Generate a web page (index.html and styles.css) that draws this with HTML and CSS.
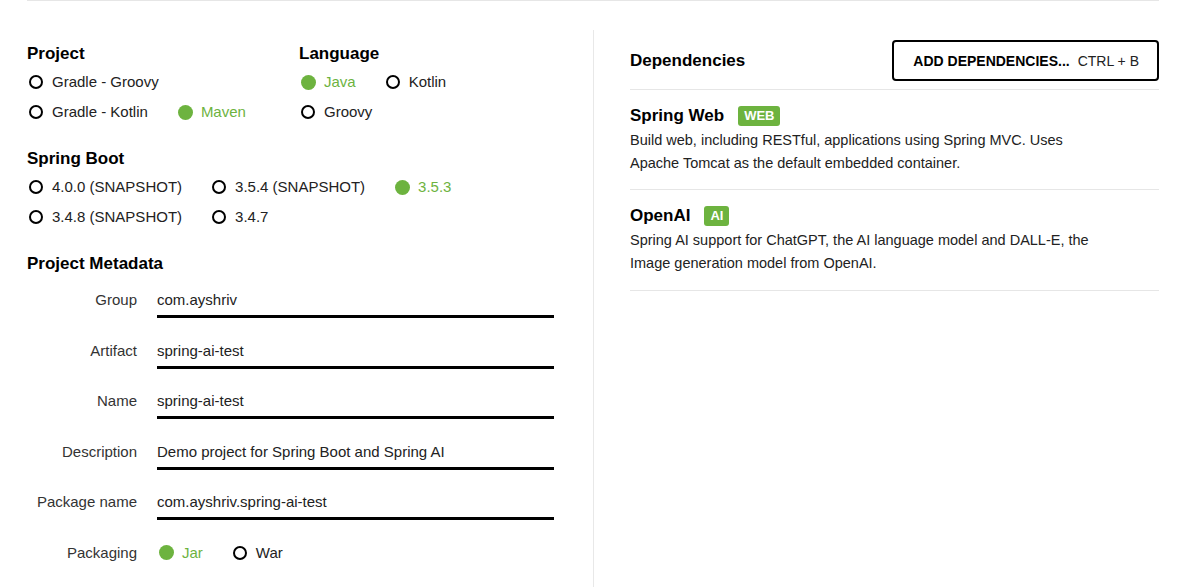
FILE: index.html
```html
<!DOCTYPE html>
<html lang="en">
<head>
    <meta charset="UTF-8">
    <meta name="viewport" content="width=device-width, initial-scale=1.0">
    <title>Spring Initializr</title>
    <link rel="stylesheet" href="styles.css">
</head>
<body>
    <div class="page">
        <div class="main">
            <div class="left-col">
                <div class="section section-split">
                    <div class="group group-project">
                        <h2>Project</h2>
                        <div class="radio-row">
                            <label class="radio"><span class="dot"></span>Gradle - Groovy</label>
                        </div>
                        <div class="radio-row">
                            <label class="radio"><span class="dot"></span>Gradle - Kotlin</label>
                            <label class="radio checked"><span class="dot"></span>Maven</label>
                        </div>
                    </div>
                    <div class="group">
                        <h2>Language</h2>
                        <div class="radio-row">
                            <label class="radio checked"><span class="dot"></span>Java</label>
                            <label class="radio"><span class="dot"></span>Kotlin</label>
                        </div>
                        <div class="radio-row">
                            <label class="radio"><span class="dot"></span>Groovy</label>
                        </div>
                    </div>
                </div>

                <div class="section">
                    <h2>Spring Boot</h2>
                    <div class="radio-row">
                        <label class="radio"><span class="dot"></span>4.0.0 (SNAPSHOT)</label>
                        <label class="radio"><span class="dot"></span>3.5.4 (SNAPSHOT)</label>
                        <label class="radio checked"><span class="dot"></span>3.5.3</label>
                    </div>
                    <div class="radio-row">
                        <label class="radio"><span class="dot"></span>3.4.8 (SNAPSHOT)</label>
                        <label class="radio"><span class="dot"></span>3.4.7</label>
                    </div>
                </div>

                <div class="section">
                    <h2>Project Metadata</h2>
                    <div class="meta-row">
                        <div class="meta-label">Group</div>
                        <div class="meta-input">com.ayshriv</div>
                    </div>
                    <div class="meta-row">
                        <div class="meta-label">Artifact</div>
                        <div class="meta-input">spring-ai-test</div>
                    </div>
                    <div class="meta-row">
                        <div class="meta-label">Name</div>
                        <div class="meta-input">spring-ai-test</div>
                    </div>
                    <div class="meta-row">
                        <div class="meta-label">Description</div>
                        <div class="meta-input">Demo project for Spring Boot and Spring AI</div>
                    </div>
                    <div class="meta-row">
                        <div class="meta-label">Package name</div>
                        <div class="meta-input">com.ayshriv.spring-ai-test</div>
                    </div>
                    <div class="meta-row">
                        <div class="meta-label">Packaging</div>
                        <div class="meta-radios">
                            <label class="radio checked"><span class="dot"></span>Jar</label>
                            <label class="radio"><span class="dot"></span>War</label>
                        </div>
                    </div>
                </div>
            </div>

            <div class="right-col">
                <div class="deps-header">
                    <h2>Dependencies</h2>
                    <button class="add-btn"><strong>ADD DEPENDENCIES...</strong><span>CTRL + B</span></button>
                </div>

                <div class="dep">
                    <div class="dep-title">Spring Web <span class="badge">WEB</span></div>
                    <p class="dep-desc">Build web, including RESTful, applications using Spring MVC. Uses Apache Tomcat as the default embedded container.</p>
                </div>

                <div class="dep">
                    <div class="dep-title">OpenAI <span class="badge">AI</span></div>
                    <p class="dep-desc">Spring AI support for ChatGPT, the AI language model and DALL-E, the Image generation model from OpenAI.</p>
                </div>
            </div>
        </div>
    </div>
</body>
</html>
```

FILE: styles.css
```css
body {
    margin: 0;
    font-family: "Liberation Sans", Arial, sans-serif;
    color: #222;
    background: #fff;
    overflow: hidden;
}

.page {
    margin: 0 29px 0 27px;
    border-top: 1px solid #e6e6e6;
}

.main {
    display: flex;
    margin-top: 29px;
    height: 557px;
}

h2 {
    margin: 0;
    font-size: 17px;
    line-height: 20px;
    font-weight: bold;
    color: #000;
}

/* left column */
.left-col {
    width: 566px;
    padding-top: 14px;
}

.section {
    margin-bottom: 22px;
}

.section h2 {
    margin-bottom: 3px;
}

.section-split {
    display: flex;
}

.group-project {
    width: 272px;
}

.radio-row {
    display: flex;
    height: 30px;
    align-items: center;
    padding-left: 2px;
}

.radio {
    display: flex;
    align-items: center;
    font-size: 15px;
    line-height: 20px;
    margin-right: 30px;
    color: #222;
    cursor: pointer;
}

.dot {
    width: 14px;
    height: 14px;
    box-sizing: border-box;
    border: 2px solid #000;
    border-radius: 50%;
    margin-right: 9px;
}

.radio.checked {
    color: #6db33f;
}

.radio.checked .dot {
    width: 15px;
    height: 15px;
    border: none;
    background: #6db33f;
    margin-right: 8px;
}

.meta-row {
    display: flex;
    height: 50.5px;
}

.meta-label {
    width: 110px;
    text-align: right;
    padding-top: 13px;
    font-size: 15px;
    line-height: 20px;
    color: #333;
}

.meta-input {
    width: 397px;
    margin-left: 20px;
    padding-top: 13px;
    padding-bottom: 5px;
    height: 20px;
    border-bottom: 3px solid #000;
    font-size: 15px;
    line-height: 20px;
    color: #222;
}

.meta-radios {
    display: flex;
    margin-left: 22px;
    padding-top: 13px;
    height: 20px;
}

/* right column */
.right-col {
    flex: 1;
    border-left: 1px solid #e8e8e8;
    padding-left: 36px;
}

.deps-header {
    display: flex;
    justify-content: space-between;
    align-items: center;
    padding-top: 10px;
    padding-bottom: 8px;
    border-bottom: 1px solid #e6e6e6;
}

.add-btn {
    display: flex;
    align-items: center;
    gap: 8px;
    height: 41px;
    padding: 0 18px 0 19px;
    background: #fff;
    border: 2px solid #000;
    border-radius: 4px;
    font-family: "Liberation Sans", Arial, sans-serif;
    font-size: 14px;
    color: #000;
    cursor: pointer;
}

.add-btn span {
    color: #222;
}

.dep {
    padding: 16px 0 14px;
    border-bottom: 1px solid #e6e6e6;
}

.dep + .dep {
    padding-bottom: 15px;
}

.dep-title {
    display: flex;
    align-items: center;
    font-size: 17px;
    line-height: 20px;
    font-weight: bold;
    color: #000;
    margin-bottom: 3px;
}

.badge {
    margin-left: 14px;
    height: 20px;
    padding: 0 6px;
    background: #6db33f;
    color: #fff;
    border-radius: 3px;
    font-size: 13px;
    line-height: 20px;
}

.dep-desc {
    margin: 0;
    width: 470px;
    font-size: 14.5px;
    line-height: 23px;
    color: #222;
}
```
